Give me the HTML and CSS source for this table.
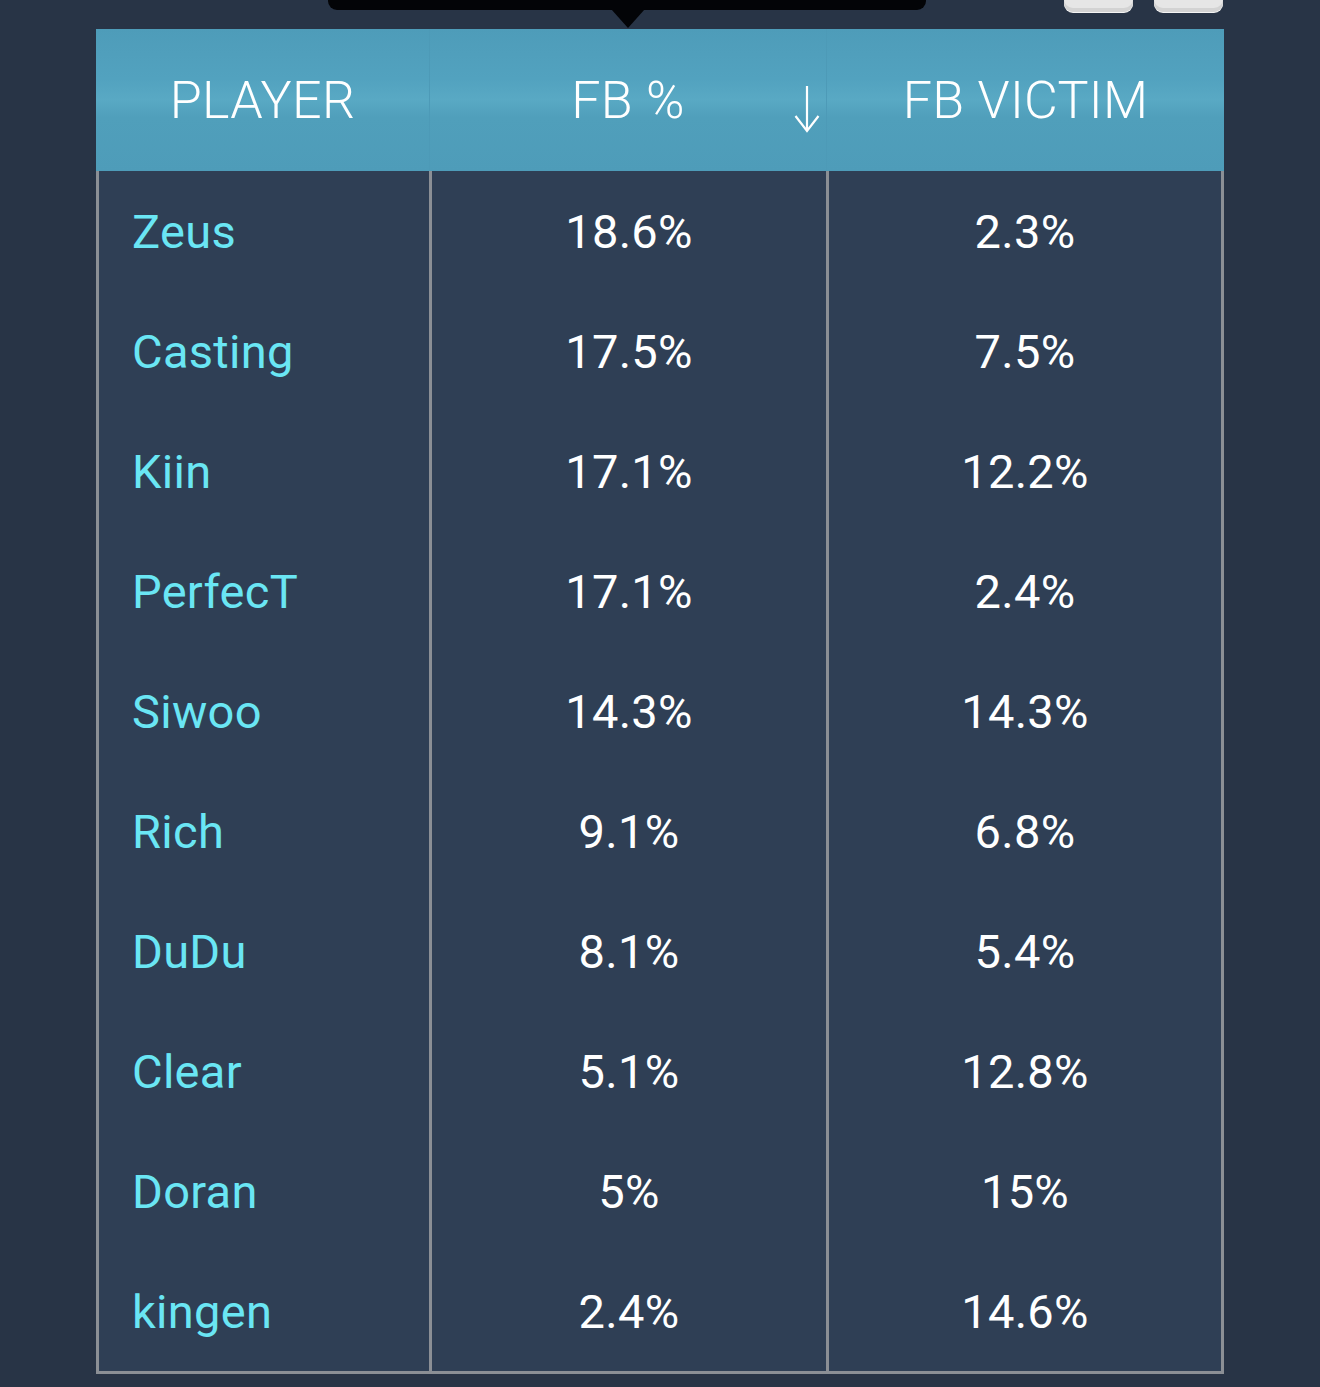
FILE: index.html
```html
<!DOCTYPE html>
<html>
<head>
<meta charset="utf-8">
<link rel="stylesheet" href="styles.css">
</head>
<body>
<div class="topbar">
  <div class="tooltip"><span class="tip-arrow"></span></div>
  <div class="btns">
    <span class="btn"></span>
    <span class="btn"></span>
  </div>
</div>
<div class="table">
  <div class="th">PLAYER</div>
  <div class="th sorted">FB %
    <svg class="sort" width="26" height="50" viewBox="0 0 26 50"><path d="M13 2 V46 M1.5 32 L13 47 L24.5 32" fill="none" stroke="#fff" stroke-width="2.2"/></svg>
  </div>
  <div class="th">FB VICTIM</div>

  <div class="td name">Zeus</div><div class="td">18.6%</div><div class="td last">2.3%</div>
  <div class="td name">Casting</div><div class="td">17.5%</div><div class="td last">7.5%</div>
  <div class="td name">Kiin</div><div class="td">17.1%</div><div class="td last">12.2%</div>
  <div class="td name">PerfecT</div><div class="td">17.1%</div><div class="td last">2.4%</div>
  <div class="td name">Siwoo</div><div class="td">14.3%</div><div class="td last">14.3%</div>
  <div class="td name">Rich</div><div class="td">9.1%</div><div class="td last">6.8%</div>
  <div class="td name">DuDu</div><div class="td">8.1%</div><div class="td last">5.4%</div>
  <div class="td name">Clear</div><div class="td">5.1%</div><div class="td last">12.8%</div>
  <div class="td name">Doran</div><div class="td">5%</div><div class="td last">15%</div>
  <div class="td name bottom">kingen</div><div class="td bottom">2.4%</div><div class="td last bottom">14.6%</div>
</div>
</body>
</html>
```
FILE: styles.css
```css
html, body {
  margin: 0;
  padding: 0;
  background: #283446;
  height: 1387px;
  overflow: hidden;
  font-family: Roboto, "Liberation Sans", sans-serif;
}
.topbar {
  position: relative;
  height: 29px;
  display: flex;
  justify-content: flex-end;
  padding-right: 97px;
}
.tooltip {
  position: absolute;
  left: 328px;
  top: 0;
  width: 598px;
  height: 10px;
  background: #030407;
  border-radius: 0 0 9px 9px;
}
.tip-arrow {
  position: absolute;
  left: 283px;
  top: 9px;
  width: 0;
  height: 0;
  border-left: 17px solid transparent;
  border-right: 17px solid transparent;
  border-top: 19px solid #030407;
}
.btns {
  display: flex;
  gap: 21px;
}
.btn {
  width: 69px;
  height: 12px;
  background: #e6e6e6;
  border-radius: 0 0 9px 9px;
  box-shadow: inset 0 -4px 0 #d3d3d3, 0 1px 0 #f4f4f4;
}
.table {
  margin-left: 96px;
  width: 1128px;
  display: grid;
  grid-template-columns: 333px 397px 398px;
  grid-template-rows: 142px repeat(9, 120px) 123px;
  background: #2f3f55;
}
.th {
  position: relative;
  display: flex;
  align-items: center;
  justify-content: center;
  color: #fff;
  font-weight: 300;
  font-size: 52px;
  letter-spacing: 0.3px;
  background: linear-gradient(to bottom, #4e9cb9 0%, #52a2bf 35%, #59a9c4 50%, #509fbb 62%, #4e9cb9 100%);
  border-left: 1px solid #4d9ab7;
}
.th:first-child { border-left: none; }
.sort {
  position: absolute;
  right: 6px;
  top: 84px;
  top: 55px;
}
.td {
  display: flex;
  align-items: center;
  justify-content: center;
  color: #fff;
  font-size: 47px;
  border-left: 3px solid #8b8f95;
  letter-spacing: 0.3px;
}
.td.name {
  justify-content: flex-start;
  padding-left: 33px;
  color: #6ae6f4;
}
.td.last {
  border-right: 3px solid #8b8f95;
}
.td.bottom {
  border-bottom: 3px solid #8b8f95;
}
```
